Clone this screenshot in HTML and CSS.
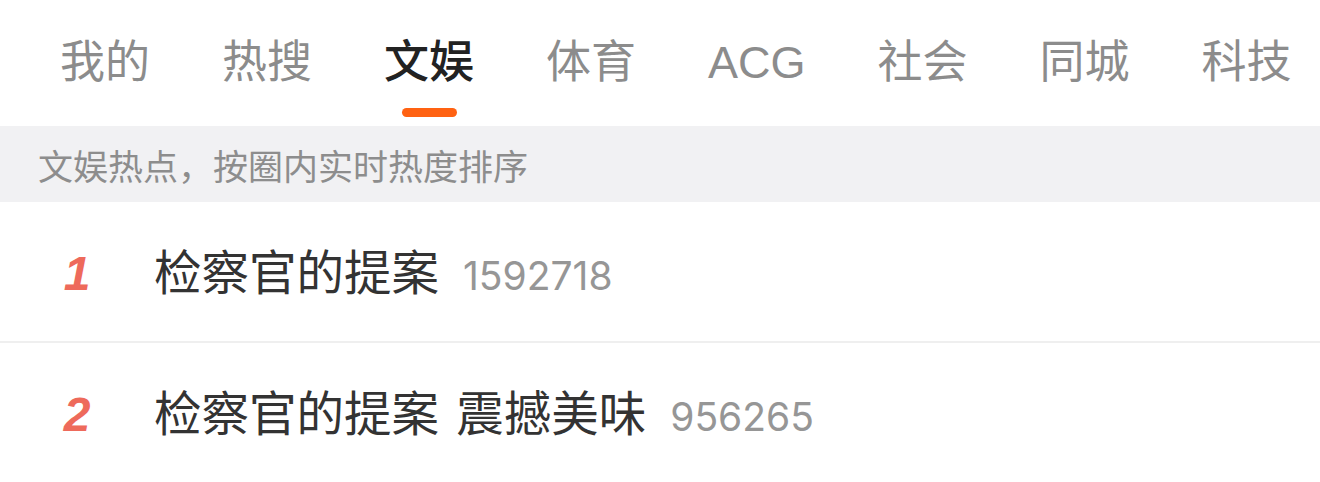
FILE: index.html
```html
<!DOCTYPE html>
<html lang="zh-CN">
<head>
    <meta charset="UTF-8">
    <meta name="viewport" content="width=device-width, initial-scale=1.0">
    <title>文娱热点</title>
    <link rel="stylesheet" href="styles.css">
</head>
<body>
    <div class="tabs">
        <div class="tab"><span class="tab-label">我的</span></div>
        <div class="tab"><span class="tab-label">热搜</span></div>
        <div class="tab active"><span class="tab-label">文娱</span><span class="tab-bar"></span></div>
        <div class="tab"><span class="tab-label">体育</span></div>
        <div class="tab"><span class="tab-label">ACG</span></div>
        <div class="tab"><span class="tab-label">社会</span></div>
        <div class="tab"><span class="tab-label">同城</span></div>
        <div class="tab"><span class="tab-label">科技</span></div>
    </div>

    <div class="notice">文娱热点，按圈内实时热度排序</div>

    <ul class="hot-list">
        <li class="hot-item">
            <span class="rank">1</span>
            <span class="title">检察官的提案</span>
            <span class="count">1592718</span>
        </li>
        <li class="hot-item">
            <span class="rank">2</span>
            <span class="title">检察官的提案 震撼美味</span>
            <span class="count">956265</span>
        </li>
    </ul>
</body>
</html>
```

FILE: styles.css
```css
body {
    margin: 0;
    background-color: #fff;
    font-family: "Liberation Sans", "Noto Sans CJK SC", sans-serif;
    width: 1320px;
    overflow: hidden;
}

.tabs {
    display: flex;
    gap: 72px;
    height: 126px;
    padding-left: 60px;
    box-sizing: border-box;
}

.tab {
    display: flex;
    flex-direction: column;
    align-items: center;
    padding-top: 40px;
}

.tab-label {
    font-size: 45px;
    line-height: 45px;
    color: #8c8c8c;
    white-space: nowrap;
}

.tab.active .tab-label {
    color: #222;
    font-weight: 500;
}

.tab-bar {
    width: 55px;
    height: 9px;
    margin-top: 23px;
    border-radius: 5px;
    background-color: #ff6212;
}

.notice {
    height: 76px;
    display: flex;
    align-items: center;
    padding-left: 38px;
    background-color: #f1f1f3;
    font-size: 35px;
    color: #8d8d8d;
}

.hot-list {
    list-style: none;
    margin: 0;
    padding: 0;
}

.hot-item {
    display: flex;
    align-items: baseline;
    height: 141px;
    padding-top: 33px;
    box-sizing: border-box;
    border-bottom: 2px solid #efefef;
}

.rank {
    width: 154px;
    text-align: center;
    font-size: 48px;
    font-weight: bold;
    font-style: italic;
    color: #ee6a5b;
}

.title {
    font-size: 47.5px;
    color: #333;
    word-spacing: 4px;
}

.count {
    margin-left: 24px;
    font-family: Inter, "Liberation Sans", sans-serif;
    font-size: 39px;
    color: #969696;
}
```
